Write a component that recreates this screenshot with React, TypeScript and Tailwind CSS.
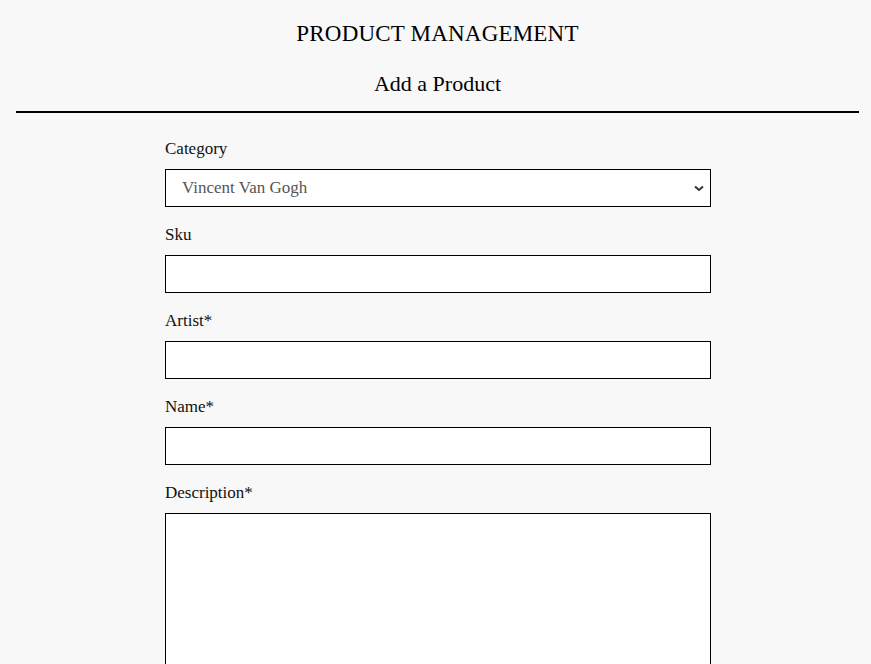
import React from "react";

const serif = { fontFamily: '"Liberation Serif", "DejaVu Serif", serif' };

function Field({ label, children }: { label: string; children: React.ReactNode }) {
  return (
    <div className="flex flex-col mb-4">
      <label className="text-[17px] leading-6 text-[#111] mb-2">{label}</label>
      {children}
    </div>
  );
}

export default function App() {
  return (
    <div className="min-h-[664px] bg-[#f8f8f8] text-black" style={serif}>
      <div className="ml-4 mr-3 pt-[19px]">
        <h1 className="text-center text-[23px] leading-[30px] tracking-[0.2px]">PRODUCT MANAGEMENT</h1>
        <h2 className="text-center text-[22px] leading-6 mt-[23px]">Add a Product</h2>
        <div className="mt-[15px] h-[2px] bg-black" />
        <form className="w-[546px] ml-[149px] mt-[24px]">
          <Field label="Category">
            <div className="relative h-[38px] border border-black bg-white">
              <select className="appearance-none w-full h-full bg-transparent pl-4 pr-8 text-[17px] text-[#555] outline-none" style={serif} defaultValue="vvg">
                <option value="vvg">Vincent Van Gogh</option>
              </select>
              <svg className="absolute right-[6px] top-[15px]" width="10" height="7" viewBox="0 0 10 7">
                <path d="M1 1.5 L5 5 L9 1.5" stroke="#333" strokeWidth="2" fill="none" />
              </svg>
            </div>
          </Field>
          <Field label="Sku">
            <input className="h-[38px] border border-black bg-white px-3 outline-none" />
          </Field>
          <Field label="Artist*">
            <input className="h-[38px] border border-black bg-white px-3 outline-none" />
          </Field>
          <Field label="Name*">
            <input className="h-[38px] border border-black bg-white px-3 outline-none" />
          </Field>
          <Field label="Description*">
            <textarea className="h-[200px] border border-black bg-white px-3 outline-none resize-none" />
          </Field>
        </form>
      </div>
    </div>
  );
}
